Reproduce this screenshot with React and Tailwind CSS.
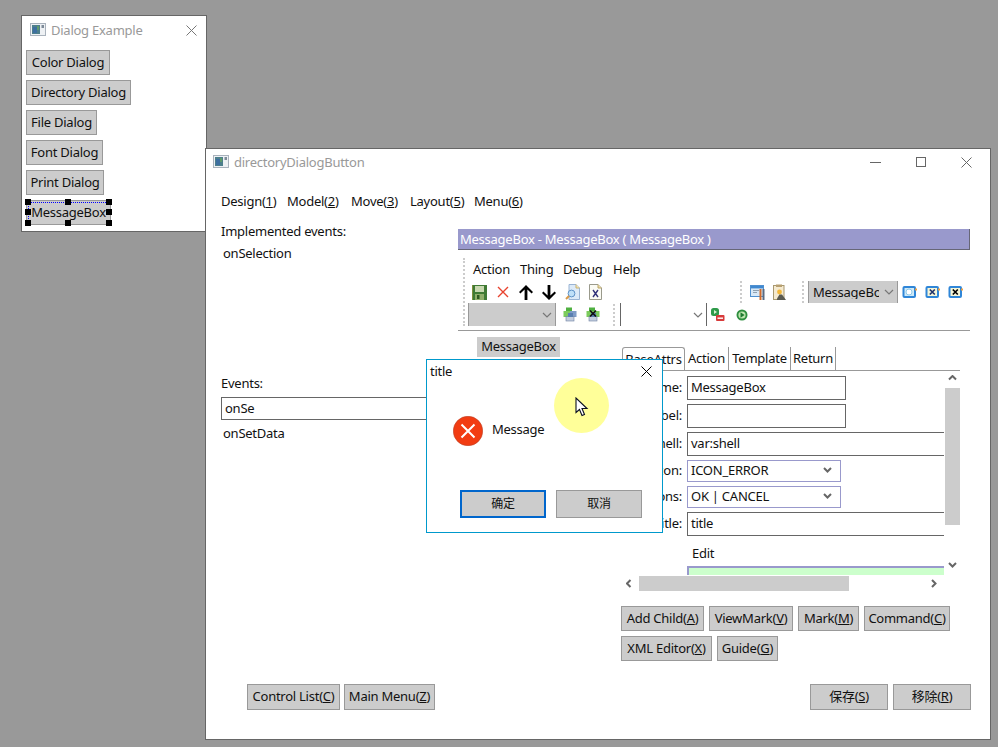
const Btn = ({ children, className = '' }) => (
  <div className={`h-[25px] px-1 flex items-center justify-center bg-[#cccccc] border border-[#999999] leading-none whitespace-nowrap ${className}`}>
    {children}
  </div>
)

const Chevron = ({ className = '', color = '#777777' }) => (
  <svg width="10" height="6" viewBox="0 0 10 6" className={className}>
    <polyline points="1,1 5,5 9,1" fill="none" stroke={color} strokeWidth="1.2" />
  </svg>
)

const BoldChevron = ({ dir = 'down' }) => {
  const points = {
    down: '1,1 4.5,4.5 8,1',
    up: '1,4.5 4.5,1 8,4.5',
    left: '4.5,1 1,4.5 4.5,8',
    right: '1,1 4.5,4.5 1,8',
  }[dir]
  return (
    <svg width="9" height="9" viewBox="0 0 9 9">
      <polyline points={points} fill="none" stroke="#666666" strokeWidth="2" />
    </svg>
  )
}

const CloseIcon = ({ color = '#666666', size = 11 }) => (
  <svg width={size} height={size} viewBox="0 0 11 11">
    <path d="M0.5 0.5 L10.5 10.5 M10.5 0.5 L0.5 10.5" stroke={color} strokeWidth="1" />
  </svg>
)

const AppIcon = () => (
  <svg width="16" height="16" viewBox="0 0 16 16">
    <rect x="0.5" y="1.5" width="15" height="12" fill="#eef1f4" stroke="#a9b2bc" />
    <rect x="2" y="3" width="8" height="9" fill="#4d7f8c" />
    <rect x="3" y="5" width="4" height="6" fill="#3d6fa0" />
    <rect x="7" y="4" width="2" height="4" fill="#5f9a6a" />
    <rect x="11.5" y="3" width="2.5" height="3" fill="#7d8a98" />
  </svg>
)

const Floppy = () => (
  <svg width="15" height="15" viewBox="0 0 15 15">
    <rect x="0" y="0" width="15" height="15" fill="#3f7a34" />
    <rect x="3" y="1" width="9" height="6" fill="#c8d8b0" />
    <rect x="3" y="9" width="9" height="6" fill="#8fae6a" />
    <rect x="5" y="10" width="2.5" height="4" fill="#2f5a20" />
    <rect x="0" y="0" width="1" height="15" fill="#7d8f3a" />
  </svg>
)

const RedX = () => (
  <svg width="12" height="12" viewBox="0 0 12 12">
    <path d="M1 1 L11 11 M11 1 L1 11" stroke="#e8432e" strokeWidth="1.4" />
  </svg>
)

// thick arrow, up by default
const Arrow = ({ up }) => (
  <svg width="14" height="15" viewBox="0 0 14 15" className={up ? '' : 'rotate-180'}>
    <path d="M7 0 L14 7 L12.6 8.4 L8.4 4.6 V15 H5.6 V4.6 L1.4 8.4 L0 7 Z" fill="#000000" />
  </svg>
)

const DocFind = () => (
  <svg width="16" height="16" viewBox="0 0 16 16">
    <path d="M4 0.5 H11 L14.5 4 V15.5 H4 Z" fill="#dceaf8" stroke="#9ab4d4" />
    <path d="M11 0.5 V4 H14.5" fill="#f6e7b8" stroke="#c8b070" />
    <circle cx="6.5" cy="9.5" r="3.4" fill="#bfe0f8" stroke="#5f93c8" />
    <path d="M4 12 L1 15" stroke="#d89a4a" strokeWidth="2" />
  </svg>
)

const DocX = () => (
  <svg width="13" height="16" viewBox="0 0 13 16">
    <path d="M0.5 0.5 H9 L12.5 4 V15.5 H0.5 Z" fill="#fbfbf4" stroke="#9a9a8c" />
    <path d="M9 0.5 V4 H12.5" fill="#f0dfa8" stroke="#b8a468" />
    <path d="M4 6 L9 13 M9 6 L4 13" stroke="#33337a" strokeWidth="1.4" />
  </svg>
)

const Puzzle = ({ x }) => (
  <svg width="14" height="15" viewBox="0 0 14 15">
    <rect x="3" y="0.5" width="6" height="6" fill="#4fb040" />
    <rect x="0.5" y="4" width="7" height="6" fill="#7ccc5c" />
    <rect x="7" y="4" width="6.5" height="6" fill={x ? '#7ccc5c' : '#7f9cc8'} />
    <rect x="3" y="9.5" width="8" height="4.5" fill="#c4cede" stroke="#6d7fa0" strokeWidth="0.6" />
    <rect x="5" y="6" width="5" height="4" fill="#5a7fb0" />
    {x && <path d="M4 3.5 L10 9.5 M10 3.5 L4 9.5" stroke="#111111" strokeWidth="1.7" />}
  </svg>
)

const Tools = () => (
  <svg width="17" height="17" viewBox="0 0 17 17">
    <rect x="0.5" y="1.5" width="13" height="11" fill="#d8e8f6" stroke="#4f90d0" />
    <rect x="1" y="2" width="12" height="2.4" fill="#3f88d0" />
    <rect x="3" y="6" width="6" height="1" fill="#8fa0b0" />
    <rect x="3" y="8" width="4" height="1" fill="#8fa0b0" />
    <path d="M10.5 5 V16" stroke="#d06a2a" strokeWidth="2" />
    <path d="M13.5 5 V16" stroke="#5a6a80" strokeWidth="2" />
  </svg>
)

const Clipboard = () => (
  <svg width="14" height="17" viewBox="0 0 14 17">
    <rect x="0.5" y="1.5" width="10.5" height="14" fill="#f5ead0" stroke="#a89870" />
    <rect x="3" y="0.5" width="6" height="2.5" fill="#b8a070" />
    <circle cx="6.5" cy="8" r="2.4" fill="#f4b83a" />
    <path d="M4 14.5 L6.5 10.5 L9 10.5 L13 16 L4 16 Z" fill="#5a5a50" />
  </svg>
)

const Globe = ({ x, dark }) => (
  <svg width="16" height="15" viewBox="0 0 16 15">
    <rect x="0.5" y="1" width="13.5" height="12" rx="2" fill="#2f86d8" />
    <rect x="2.5" y="3" width="9.5" height="8" fill={x ? '#f6f6d8' : '#cfeaf8'} />
    {!x && <circle cx="7" cy="7" r="3" fill="#ffffff" stroke="#8fc8e8" />}
    {x && <path d="M4.8 4.5 L9.8 9.5 M9.8 4.5 L4.8 9.5" stroke={dark ? '#000000' : '#22336a'} strokeWidth="1.7" />}
    <rect x="13" y="3.5" width="2" height="2" fill="#f0a040" />
  </svg>
)

const GreenMinus = () => (
  <svg width="14" height="14" viewBox="0 0 14 14">
    <rect x="0" y="0" width="8" height="8" rx="2.5" fill="#2f9a4a" />
    <path d="M3 2 L6 4 L3 6 Z" fill="#d8f0d0" />
    <rect x="5" y="7" width="8.5" height="6" rx="1" fill="#d83a3a" />
    <rect x="6.5" y="9.5" width="5.5" height="1.4" fill="#ffffff" />
  </svg>
)

const GreenPlay = () => (
  <svg width="12" height="12" viewBox="0 0 12 12">
    <circle cx="6" cy="6" r="5.5" fill="#2f8f3f" />
    <circle cx="6" cy="6" r="3.6" fill="#bfe6b0" />
    <path d="M4.5 3.2 L8.6 6 L4.5 8.8 Z" fill="#1f7a30" />
  </svg>
)

const Slot = ({ children, className = '' }) => (
  <div className={`w-[23px] h-full flex items-center justify-center ${className}`}>{children}</div>
)

const Grip = ({ className = '' }) => (
  <div className={`w-0 border-l-2 border-dotted border-[#cccccc] ${className}`} />
)

const FIELDS = [
  { label: 'name:', value: 'MessageBox', boxed: true, h: 'h-[24px]' },
  { label: 'label:', value: '', boxed: true, h: 'h-[24px]' },
  { label: 'shell:', value: 'var:shell', h: 'h-[24px]' },
  { label: 'icon:', value: 'ICON_ERROR', select: true, h: 'h-[22px]' },
  { label: 'buttons:', value: 'OK | CANCEL', select: true, h: 'h-[22px]' },
  { label: 'title:', value: 'title', h: 'h-[24px]' },
]

function Field({ label, value, boxed, select, h }) {
  return (
    <div className="flex items-center gap-[5px]">
      <div className="w-[60px] pb-[2px] text-right whitespace-nowrap">{label}</div>
      {select ? (
        <div className={`w-[154px] ${h} border border-[#9999cc] flex items-center justify-between pl-[3px] pr-[8px]`}>
          <span className="pb-[2px]">{value}</span>
          <BoldChevron />
        </div>
      ) : (
        <div className={`${boxed ? 'w-[159px] border' : 'flex-1 border border-r-0'} ${h} border-[#666666] flex items-center pl-[3px] pb-[2px]`}>
          {value}
        </div>
      )}
    </div>
  )
}

function DialogExample() {
  const buttons = [
    { name: 'Color Dialog', width: 'w-[84px]' },
    { name: 'Directory Dialog', width: 'w-[105px]' },
    { name: 'File Dialog', width: 'w-[71px]' },
    { name: 'Font Dialog', width: 'w-[77px]' },
    { name: 'Print Dialog', width: 'w-[78px]' },
  ]
  return (
    <div className="absolute left-[21px] top-[15px] w-[186px] h-[217px] bg-white border border-[#666666]">
      <div className="h-[28px] pl-[8px] pr-[9px] flex items-center justify-between">
        <div className="flex items-center gap-[5px]">
          <AppIcon />
          <span className="text-[#999999]">Dialog Example</span>
        </div>
        <CloseIcon color="#777777" size={11} />
      </div>
      <div className="mt-[6px] pl-[4px] flex flex-col items-start gap-[5px]">
        {buttons.map((b) => (
          <Btn key={b.name} className={b.width}>{b.name}</Btn>
        ))}
        <div className="relative">
          <Btn className="w-[85px] !px-0">MessageBox</Btn>
          {/* selection frame and handles */}
          <div className="absolute left-[2px] top-[2px] w-[84px] h-[19px] border-l border-t border-dotted border-[#0000ff]" />
          <div className="absolute left-[-1px] top-[-1px] w-[6px] h-[6px] bg-black" />
          <div className="absolute left-[39px] top-[-1px] w-[6px] h-[6px] bg-black" />
          <div className="absolute left-[80px] top-[-1px] w-[6px] h-[6px] bg-black" />
          <div className="absolute left-[-1px] top-[9px] w-[6px] h-[6px] bg-black" />
          <div className="absolute left-[80px] top-[9px] w-[6px] h-[6px] bg-black" />
          <div className="absolute left-[-1px] top-[20px] w-[6px] h-[6px] bg-black" />
          <div className="absolute left-[39px] top-[20px] w-[6px] h-[6px] bg-black" />
          <div className="absolute left-[80px] top-[20px] w-[6px] h-[6px] bg-black" />
        </div>
      </div>
    </div>
  )
}

function Toolbar() {
  return (
    <div className="h-[80px] flex pt-[8px]">
      <Grip className="ml-[5px] h-[68px]" />
      <div className="ml-[3px] flex-1 flex flex-col">
        <div className="h-[23px] flex items-center gap-[11px] pl-[5px]">
          <span className="w-[36px]">Action</span>
          <span className="w-[32px]">Thing</span>
          <span className="w-[39px]">Debug</span>
          <span>Help</span>
        </div>
        <div className="h-[22px] flex items-center">
          <Slot><Floppy /></Slot>
          <Slot><RedX /></Slot>
          <Slot><Arrow up /></Slot>
          <Slot><Arrow /></Slot>
          <Slot className="ml-[1px]"><DocFind /></Slot>
          <Slot><DocX /></Slot>
          <Grip className="ml-[133px] h-[22px]" />
          <Slot className="ml-[5px]"><Tools /></Slot>
          <Slot className="-ml-[2px]"><Clipboard /></Slot>
          <Grip className="ml-[11px] h-[22px]" />
          <div className="ml-[4px] w-[90px] h-[22px] bg-[#cccccc] border-x border-[#999999] flex items-center pl-[4px] overflow-hidden">
            <span className="w-[66px] overflow-hidden whitespace-nowrap">MessageBox</span>
            <Chevron className="ml-[5px]" />
          </div>
          <Slot><Globe /></Slot>
          <Slot><Globe x /></Slot>
          <Slot><Globe x dark /></Slot>
        </div>
        <div className="h-[23px] flex items-center">
          <div className="w-[88px] h-[23px] bg-[#cccccc] border-x border-[#999999] flex items-center justify-end pr-[3px]">
            <Chevron />
          </div>
          <Slot className="ml-[2px]"><Puzzle /></Slot>
          <Slot><Puzzle x /></Slot>
          <Grip className="ml-[9px] h-[22px]" />
          <div className="ml-[5px] w-[87px] h-[23px] border-x border-[#666666] flex items-center justify-end pr-[3px]">
            <Chevron />
          </div>
          <Slot className="-ml-[1px]"><GreenMinus /></Slot>
          <Slot className="ml-[1px]"><GreenPlay /></Slot>
        </div>
      </div>
    </div>
  )
}

function Editor() {
  return (
    <div className="flex flex-col">
      <div className="h-[23px] flex">
        <div className="w-[63px] border border-b-0 border-[#999999] rounded-t-[3px] flex items-center justify-center">BaseAttrs</div>
        <div className="w-[44px] border-r border-[#999999] flex items-center justify-center">Action</div>
        <div className="w-[62px] border-r border-[#999999] flex items-center justify-center">Template</div>
        <div className="w-[45px] border-r border-[#999999] flex items-center justify-center">Return</div>
      </div>
      <div className="border-t border-[#999999] w-[338px] grid grid-cols-[322px_16px] grid-rows-[204px_16px]">
        <div className="overflow-hidden pt-[5px] flex flex-col">
          <div className="flex flex-col gap-[4px]">
            {FIELDS.map((f) => (
              <Field key={f.label} {...f} />
            ))}
          </div>
          <div className="ml-[70px] mt-[8px] h-[18px] leading-[18px]">Edit</div>
          <div className="ml-[65px] -mr-[10px] mt-[4px] h-[40px] shrink-0 border-2 border-[#9999cc] bg-[#ccffcc] pl-[15px] pt-[5px]">Message</div>
        </div>
        <div className="flex flex-col items-center">
          <div className="h-[17px] flex items-center justify-center"><BoldChevron dir="up" /></div>
          <div className="w-[15px] h-[137px] bg-[#cccccc]" />
          <div className="flex-1 flex items-end justify-center pb-[4px]"><BoldChevron /></div>
        </div>
        <div className="flex items-center pl-[4px]">
          <BoldChevron dir="left" />
          <div className="ml-[4px] w-[210px] h-[15px] bg-[#cccccc]" />
          <div className="ml-auto mr-[4px]"><BoldChevron dir="right" /></div>
        </div>
      </div>
      <div className="mt-[15px] -ml-[1px] flex gap-[5px]">
        <Btn className="w-[83px]">Add Child(<u>A</u>)</Btn>
        <Btn className="w-[84px]">ViewMark(<u>V</u>)</Btn>
        <Btn className="w-[61px]">Mark(<u>M</u>)</Btn>
        <Btn className="w-[86px]">Command(<u>C</u>)</Btn>
      </div>
      <div className="mt-[5px] -ml-[1px] flex gap-[5px]">
        <Btn className="w-[91px]">XML Editor(<u>X</u>)</Btn>
        <Btn className="w-[61px]">Guide(<u>G</u>)</Btn>
      </div>
    </div>
  )
}

function MainWindow() {
  return (
    <div className="absolute left-[205px] top-[148px] w-[786px] h-[592px] bg-white border border-[#666666] flex flex-col">
      <div className="h-[26px] shrink-0 pl-[7px] pr-[18px] flex items-center justify-between">
        <div className="flex items-center gap-[5px]">
          <AppIcon />
          <span className="text-[#999999]">directoryDialogButton</span>
        </div>
        <div className="flex items-center gap-[35px]">
          <div className="w-[11px] h-0 border-t border-[#666666]" />
          <div className="w-[10px] h-[10px] border border-[#666666]" />
          <CloseIcon />
        </div>
      </div>
      <div className="mt-[16px] h-[20px] shrink-0 pl-[15px] flex items-center">
        <span className="w-[66px]">Design(<u>1</u>)</span>
        <span className="w-[64px]">Model(<u>2</u>)</span>
        <span className="w-[59px]">Move(<u>3</u>)</span>
        <span className="w-[64px]">Layout(<u>5</u>)</span>
        <span>Menu(<u>6</u>)</span>
      </div>
      <div className="mt-[11px] flex-1 flex">
        <div className="w-[252px] pl-[15px] shrink-0">
          <div className="h-[18px] leading-[18px]">Implemented events:</div>
          <div className="mt-[4px] ml-[2px] h-[18px] leading-[18px]">onSelection</div>
          <div className="mt-[112px] h-[18px] leading-[18px]">Events:</div>
          <div className="mt-[5px] w-[237px] h-[23px] border border-[#666666] flex items-center pl-[3px]">onSe</div>
          <div className="mt-[4px] ml-[2px] h-[18px] leading-[18px]">onSetData</div>
        </div>
        <div className="w-[512px] pt-[7px]">
          <div className="h-[21px] bg-[#9999cc] border-b border-r border-[#666677] text-white pl-[2px] flex items-center">
            MessageBox - MessageBox ( MessageBox )
          </div>
          <Toolbar />
          <div className="border-t border-[#999999] h-0" />
          <div className="flex">
            <div className="w-[164px] pl-[19px] pt-[6px]">
              <div className="w-[83px] h-[20px] pb-[2px] bg-[#cccccc] flex items-center justify-center">MessageBox</div>
            </div>
            <div className="pt-[16px]">
              <Editor />
            </div>
          </div>
        </div>
      </div>
      <div className="mb-[29px] h-[26px] shrink-0 pl-[41px] pr-[19px] flex items-stretch">
        <Btn className="!h-[26px] pb-[2px] w-[93px]">Control List(<u>C</u>)</Btn>
        <Btn className="!h-[26px] pb-[2px] w-[91px] ml-[4px]">Main Menu(<u>Z</u>)</Btn>
        <Btn className="!h-[26px] pb-[2px] w-[78px] ml-auto">保存(<u>S</u>)</Btn>
        <Btn className="!h-[26px] pb-[2px] w-[78px] ml-[5px]">移除(<u>R</u>)</Btn>
      </div>
    </div>
  )
}

function MessageDialog() {
  return (
    <div className="absolute left-[426px] top-[359px] w-[237px] h-[174px] bg-white border border-[#0099cc] flex flex-col">
      <div className="h-[22px] shrink-0 pl-[3px] pr-[10px] flex items-center justify-between">
        <span>title</span>
        <CloseIcon color="#000000" />
      </div>
      <div className="mt-[34px] pl-[26px] flex items-center gap-[9px]">
        <svg width="30" height="30" viewBox="0 0 30 30">
          <circle cx="15" cy="15" r="14.7" fill="#f23c12" stroke="#b8432a" strokeWidth="0.6" />
          <path d="M8.5 8.5 L21.5 21.5 M21.5 8.5 L8.5 21.5" stroke="#ffffff" strokeWidth="2" />
        </svg>
        <span className="-mt-[4px]">Message</span>
      </div>
      <div className="mt-auto mb-[14px] pl-[33px] flex gap-[10px]">
        <div className="w-[86px] h-[28px] bg-[#cccccc] border-2 border-[#0066cc] flex items-center justify-center text-[12px]">确定</div>
        <div className="w-[86px] h-[28px] bg-[#cccccc] border border-[#999999] flex items-center justify-center text-[12px]">取消</div>
      </div>
      {/* pointer highlight from the screen recorder */}
      <div className="absolute left-[127px] top-[18px] w-[55px] h-[55px] rounded-full bg-[#ffff99]" />
      <svg width="14" height="20" viewBox="0 0 14 20" className="absolute left-[148px] top-[37px]">
        <path d="M1 1 V15.5 L4.5 12.5 L7 18.5 L9.5 17.5 L7 11.5 L12 11.5 Z" fill="#ffffff" stroke="#0a1020" strokeWidth="1.1" />
      </svg>
    </div>
  )
}

export default function App() {
  return (
    <div className="relative w-[998px] h-[747px] overflow-hidden bg-[#999999] text-[13px] tracking-[-0.25px] leading-none text-[#111111] font-['Noto_Sans','Noto_Sans_CJK_SC',sans-serif]">
      <DialogExample />
      <MainWindow />
      <MessageDialog />
    </div>
  )
}
